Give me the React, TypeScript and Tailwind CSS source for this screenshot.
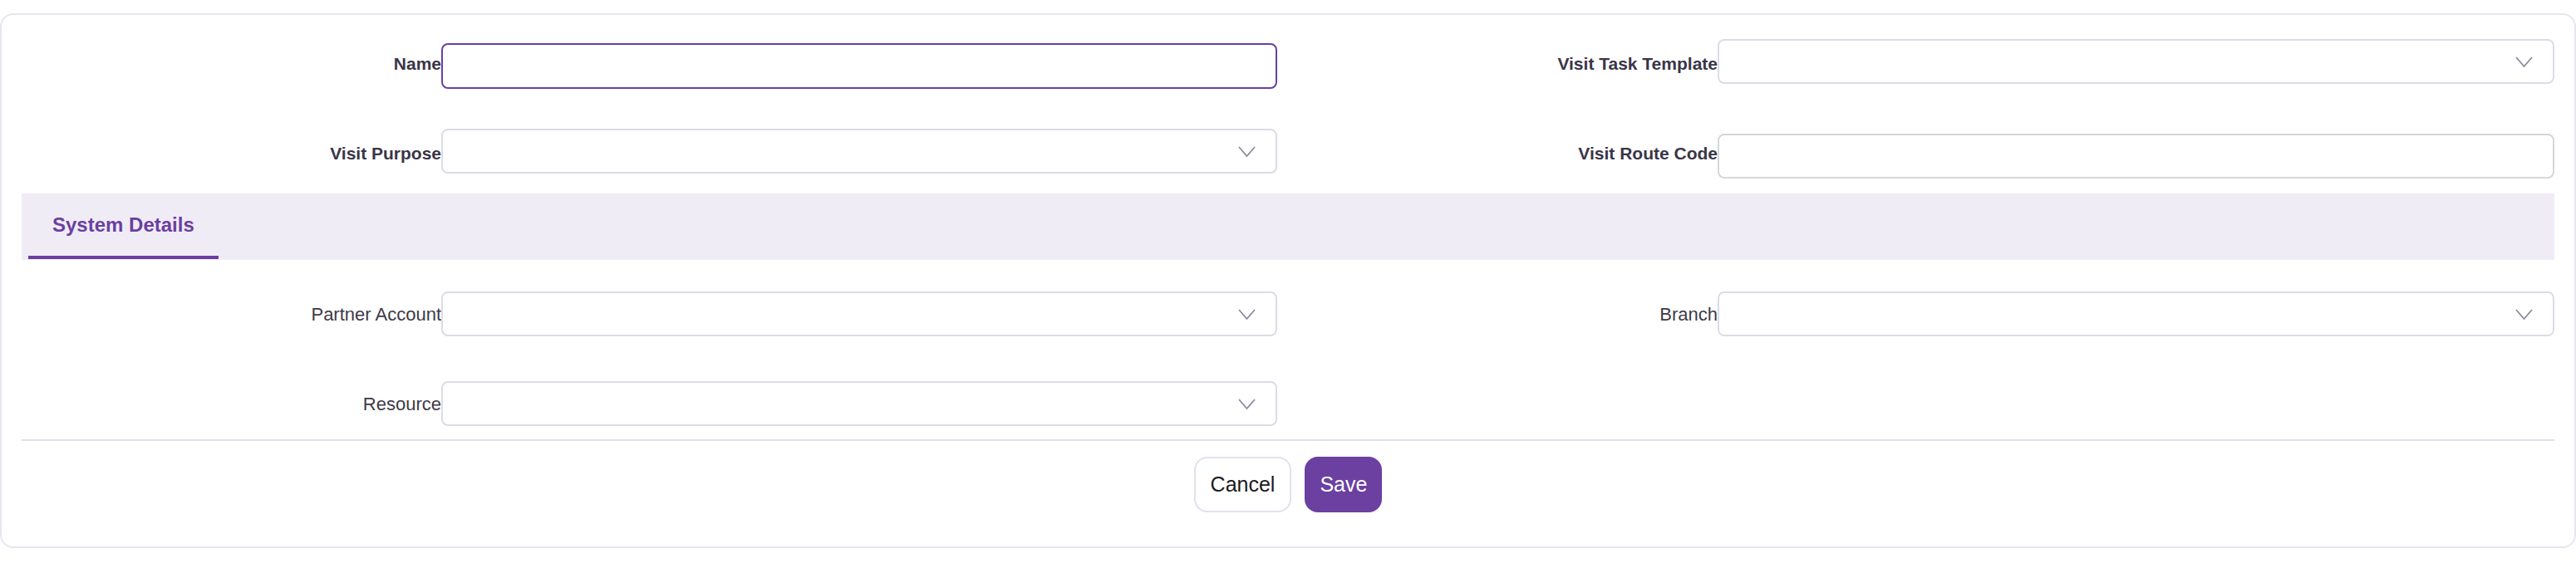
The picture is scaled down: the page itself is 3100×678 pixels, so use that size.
function Chevron() {
  return (
    <svg width="21" height="13" viewBox="0 0 21 13" fill="none" className="shrink-0">
      <polyline points="1,1 10.5,12 20,1" stroke="#8e8a9c" strokeWidth="1.8" strokeLinejoin="miter" />
    </svg>
  );
}

function Label({ text, bold }: { text: string; bold?: boolean }) {
  return (
    <div
      className={
        bold
          ? 'h-[54px] flex items-center justify-end text-[21px] font-bold text-[#3a3547] whitespace-nowrap'
          : 'h-[54px] flex items-center justify-end text-[22px] text-[#3d3a48] whitespace-nowrap'
      }
    >
      {text}
    </div>
  );
}

function SelectBox({ className = '' }: { className?: string }) {
  return (
    <div
      className={`h-[54px] flex items-center justify-end pr-[24px] bg-white border-2 border-[#dddbe7] rounded-[8px] ${className}`}
    >
      <Chevron />
    </div>
  );
}

export default function App() {
  return (
    <div className="w-[3100px] h-[678px] bg-white pt-[16px] font-['Liberation_Sans',Arial,sans-serif]">
      <div className="border-2 border-[#e7e5ee] rounded-[16px] px-[24px] pt-[32px] pb-[41px]">
        {/* main fields */}
        <div className="grid grid-cols-[505px_1006px_530px_1fr] gap-y-[54px] items-start">
          <Label text="Name" bold />
          <input
            className="mt-[2px] -mb-[3px] h-[55px] w-full border-2 border-[#6b3fa0] rounded-[8px] outline-none px-3 text-[22px]"
            type="text"
          />
          <Label text="Visit Task Template" bold />
          <SelectBox className="-mt-[3px] mb-[3px]" />

          <Label text="Visit Purpose" bold />
          <SelectBox className="-mt-[3px] mb-[3px]" />
          <Label text="Visit Route Code" bold />
          <input
            className="mt-[3px] -mb-[3px] h-[54px] w-full border-2 border-[#d6d6d9] rounded-[8px] outline-none px-3 text-[22px]"
            type="text"
          />
        </div>

        {/* section tabs */}
        <div className="mt-[21px] h-[80px] bg-[#efecf6] flex items-stretch pb-[1px]">
          <div className="ml-[8px] px-[29px] flex items-center border-b-4 border-[#6b3fa0] text-[24px] font-bold text-[#6b3fa0]">
            System Details
          </div>
        </div>

        <div className="mt-[38px] grid grid-cols-[505px_1006px_530px_1fr] gap-y-[54px] items-start">
          <Label text="Partner Account" />
          <SelectBox />
          <Label text="Branch" />
          <SelectBox />

          <Label text="Resource" />
          <SelectBox />
        </div>

        <div className="mt-[16px] h-[2px] bg-[#e0dfea]" />

        <div className="mt-[19px] flex justify-center gap-[16px]">
          <button className="h-[67px] px-[18px] border-2 border-[#e2e0ee] rounded-[16px] bg-white text-[25px] text-[#1b1a20]">
            Cancel
          </button>
          <button className="h-[67px] px-[18px] rounded-[16px] bg-[#6b40a0] text-[25px] text-white">
            Save
          </button>
        </div>
      </div>
    </div>
  );
}
